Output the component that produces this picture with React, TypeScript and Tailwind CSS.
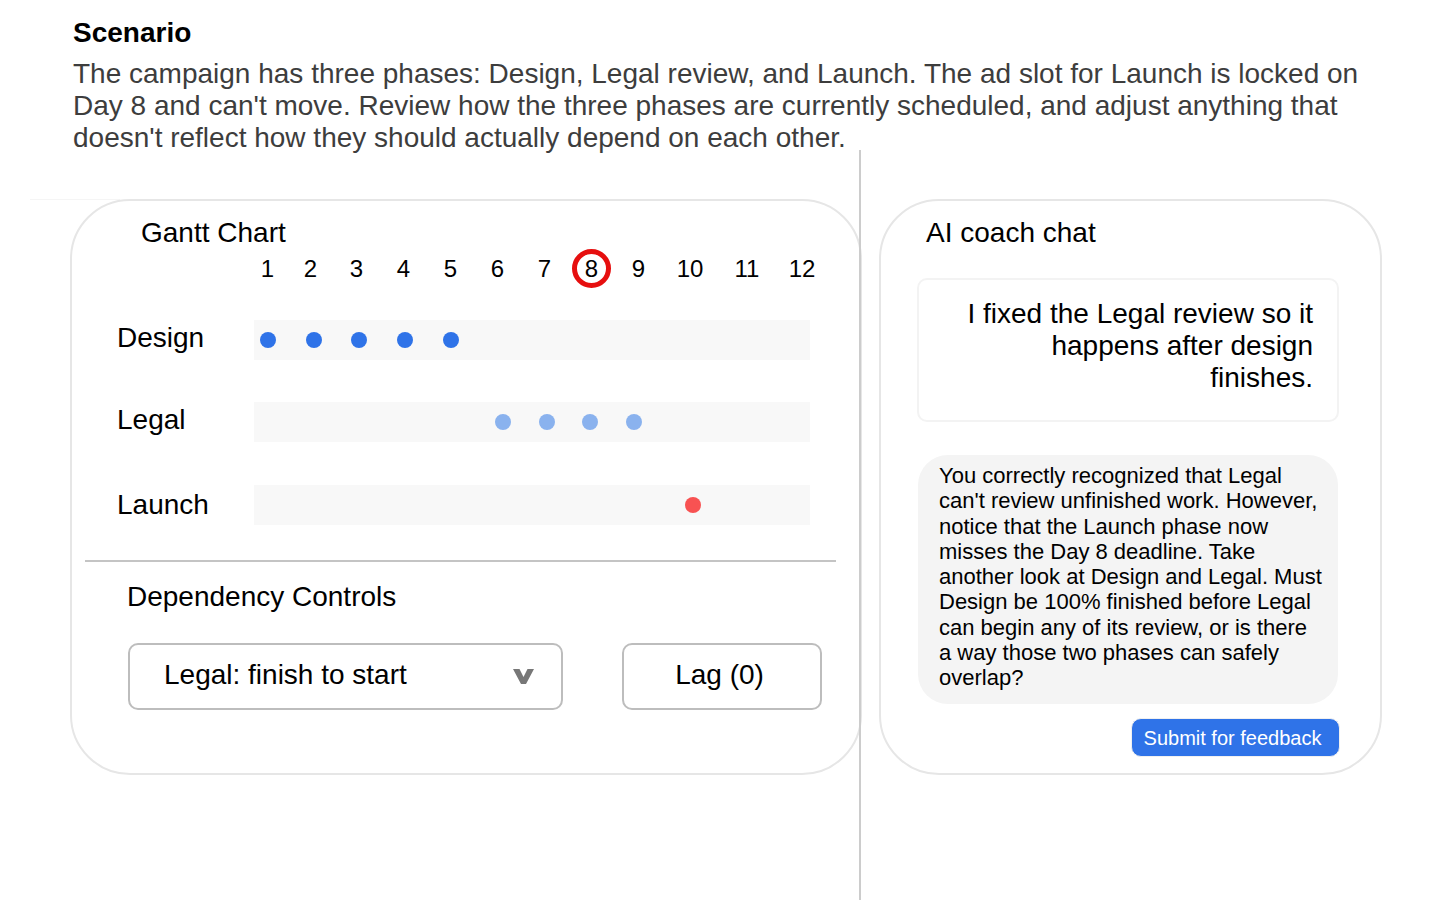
const DAYS = ["1", "2", "3", "4", "5", "6", "7", "8", "9", "10", "11", "12"];

function Dot({ color }: { color: string }) {
  return <span className={`block size-4 shrink-0 rounded-full ${color}`} />;
}

function Row({
  label,
  labelClass = "pb-1",
  className,
  children,
}: {
  label: string;
  labelClass?: string;
  className: string;
  children: React.ReactNode;
}) {
  return (
    <div className="flex h-10 items-center">
      <div className={`w-[182px] pl-[45px] ${labelClass}`}>{label}</div>
      <div className={`flex h-10 w-[556px] items-center bg-[#f8f8f8] ${className}`}>
        {children}
      </div>
    </div>
  );
}

function GanttCard() {
  return (
    <section className="flex h-[576px] w-[792px] shrink-0 flex-col rounded-[60px] border-2 border-[#e6e6e6] text-[28px] leading-8 text-black">
      <h2 className="mt-[16px] pl-[69px]">Gantt Chart</h2>
      <div className="ml-[175px] grid h-10 grid-cols-[41px_45px_47px_47px_47px_47px_47px_47px_47px_56px_58px_52px] items-center text-center text-[24px]">
        {DAYS.map((d) => (
          <div key={d} className="flex justify-center">
            {d === "8" ? (
              <span className="-mt-[1px] flex size-[39px] items-center justify-center rounded-full border-[5px] border-[#e60f0f]">
                {d}
              </span>
            ) : (
              d
            )}
          </div>
        ))}
      </div>
      <div className="mt-[31px] flex flex-col">
        <Row label="Design" className="gap-[29.7px] pl-[6px]">
          {[1, 2, 3, 4, 5].map((i) => (
            <Dot key={i} color="bg-[#2f73e8]" />
          ))}
        </Row>
        <div className="mt-[42px]">
          <Row label="Legal" className="gap-[27.7px] pl-[241px]">
            {[6, 7, 8, 9].map((i) => (
              <Dot key={i} color="bg-[#8ab2ee]" />
            ))}
          </Row>
        </div>
        <div className="mt-[43px]">
          <Row label="Launch" labelClass="" className="pl-[431px]">
            <Dot color="bg-[#f85252]" />
          </Row>
        </div>
      </div>
      <div className="mt-[35px] ml-[13px] h-[2px] w-[751px] bg-[#c4c4c4]" />
      <h2 className="mt-[19px] pl-[55px]">Dependency Controls</h2>
      <div className="mt-[30px] ml-[56px] flex gap-[59px]">
        <div className="flex h-[67px] w-[435px] items-center justify-between rounded-[10px] border-2 border-[#bdbdbd] pr-[27px] pl-[34px]">
          <span className="pb-1">Legal: finish to start</span>
          <svg width="21" height="15" viewBox="0 0 21 15">
            <path d="M0 0H6.5L10.5 8 14.5 0H21L13 15H8Z" fill="#777777" />
          </svg>
        </div>
        <div className="flex h-[67px] w-[200px] items-center justify-center rounded-[10px] border-2 border-[#bdbdbd] pr-[5px] pb-1">
          Lag (0)
        </div>
      </div>
    </section>
  );
}

function ChatCard() {
  return (
    <section className="flex h-[576px] w-[503px] shrink-0 flex-col rounded-[60px] border-2 border-[#e6e6e6] text-black">
      <h2 className="mt-[16px] pl-[45px] text-[28px] leading-8">AI coach chat</h2>
      <div className="mt-[29px] ml-[36px] h-[144px] w-[422px] rounded-[10px] border-2 border-[#f3f3f3] pt-[18px] pr-[24px] pl-[40px] text-right text-[28px] leading-8">
        I fixed the Legal review so it happens after design finishes.
      </div>
      <div className="mt-[33px] ml-[37px] h-[249px] w-[420px] rounded-[30px] bg-[#f4f4f4] pt-[8px] pr-[16px] pl-[21px] text-[22px] leading-[25.25px]">
        You correctly recognized that Legal can't review unfinished work. However, notice that the Launch phase now misses the Day 8 deadline. Take another look at Design and Legal. Must Design be 100% finished before Legal can begin any of its review, or is there a way those two phases can safely overlap?
      </div>
      <div className="mt-[14px] mr-[40px] flex justify-end">
        <button className="flex h-[39px] w-[209px] items-center justify-center rounded-[10px] border border-[#f0f0f0] bg-[#2f73e8] pr-[6px] text-[20px] text-white">
          Submit for feedback
        </button>
      </div>
    </section>
  );
}

export default function App() {
  return (
    <div className="relative h-[900px] w-[1440px] overflow-hidden bg-white font-['Liberation_Sans',Arial,sans-serif]">
      <header className="pt-[17px] pr-[60px] pl-[73px]">
        <h1 className="text-[28px] leading-8 font-bold text-black">Scenario</h1>
        <p className="mt-[9px] text-[28px] leading-8 text-[#3d3d3d]">
          The campaign has three phases: Design, Legal review, and Launch. The ad slot for Launch is locked on Day 8 and can't move. Review how the three phases are currently scheduled, and adjust anything that doesn't reflect how they should actually depend on each other.
        </p>
      </header>
      <div className="absolute top-[199px] left-[30px] h-px w-[90px] bg-[#f5f5f5]" />
      <div className="relative mt-[45px] ml-[70px] flex gap-[17px]">
        <GanttCard />
        <ChatCard />
      </div>
      <div className="absolute top-[150px] bottom-0 left-[859px] w-[2px] bg-[#cccccc]" />
    </div>
  );
}
